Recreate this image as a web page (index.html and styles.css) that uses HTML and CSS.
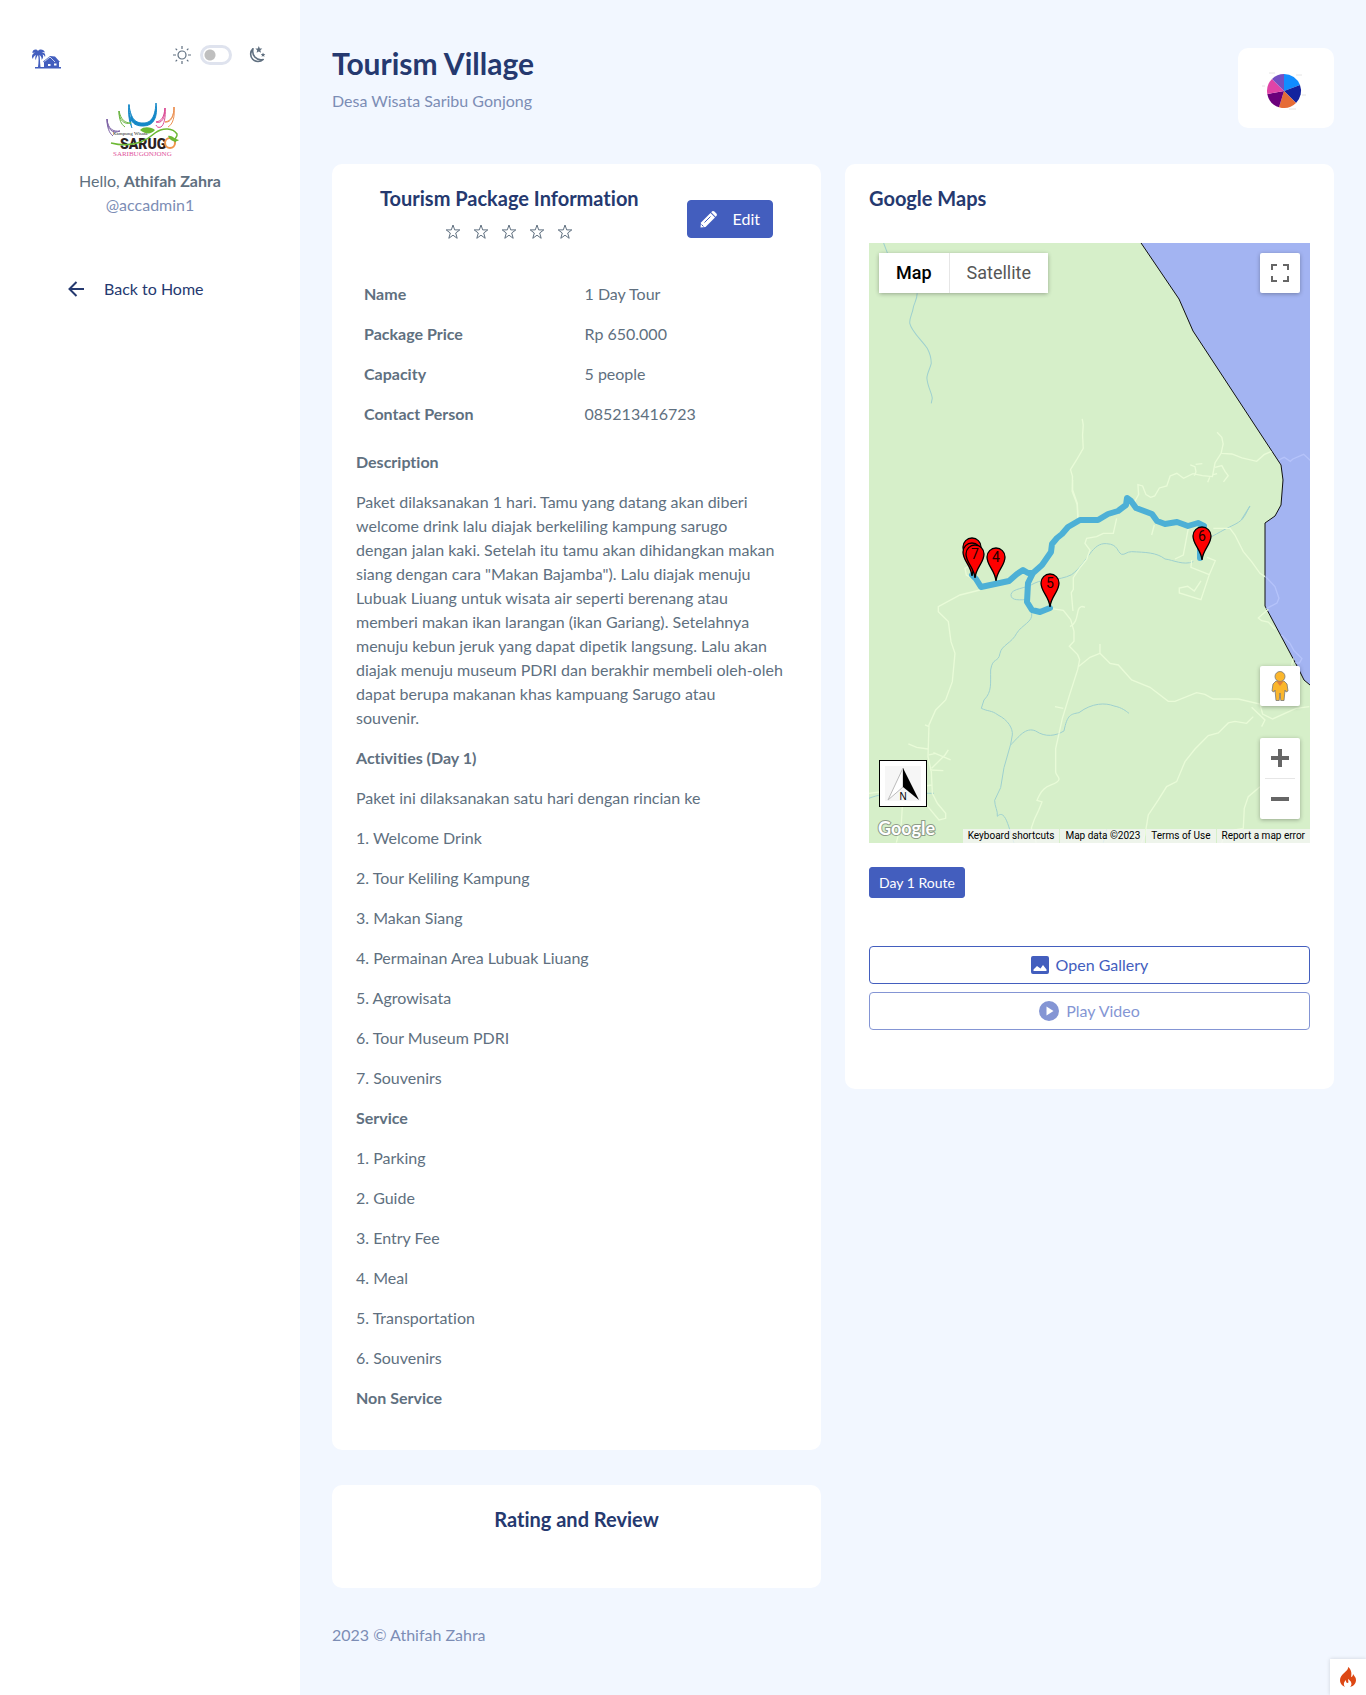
FILE: index.html
```html
<!DOCTYPE html>
<html lang="en">
<head>
<meta charset="utf-8">
<meta name="viewport" content="width=device-width, initial-scale=1">
<title>Tourism Village</title>
<link rel="stylesheet" href="styles.css">
</head>
<body>
<div class="app">
  <aside class="sidebar">
    <div class="sidebar-top">
      <a class="brand" href="#" aria-label="Home">
        <svg width="29" height="20" viewBox="0 0 29 20" fill="#435ebe"><path d="M6 2C4-1 0 1 .5 4L3 3.500C0 5-1 8 1 10c0-2 1-3 3-4-1 2-1 4 0 5 0-2 1-4 2-5 1 3 .5 8 0 12H3v1.500h26V18h-2v-5h1l-5-5.500-5-.5-7 5.500 1 1V18H8.500C8 14 8 9 7.500 6 9 7 10 9 9.500 11c2-2 2-4 1-5.500 1 0 2 1 2.500 2.500C14 5 12 3 9.500 3.500 11 2.500 12 3 13 3.500 12 .5 8-.5 6 2z"/><path d="M12.500 12.500L18 8l5 5" fill="none" stroke="#fff" stroke-width=".7"/><path d="M16 15h2.500v2H16zM22 14.500h2.500v2H22z" fill="#fff"/></svg>
      </a>
      <div class="theme">
        <svg width="18" height="18" viewBox="0 0 18 18" fill="none" stroke="#607080" stroke-width="1.200"><circle cx="9" cy="9" r="4"/><path d="M9 0v3M9 15v3M0 9h3M15 9h3M2.600 2.600l1.500 1.500M13.900 13.900l1.500 1.500M2.600 15.400l1.500-1.500M13.900 4.100l1.500-1.500"/></svg>
        <input class="switch" type="checkbox" role="switch" aria-label="Dark mode">
        <svg width="18" height="18" viewBox="0 0 18 18"><path d="M5 2.700A7.300 7.300 0 1 0 15.200 13.500C8 15 3.500 9 5 2.700z" fill="none" stroke="#607080" stroke-width="1.600" stroke-linejoin="round"/><path d="M10.800 0l1 2.400 2.500.2-1.900 1.700.6 2.500-2.200-1.400-2.200 1.400.6-2.500-1.900-1.700 2.500-.2zM15 6.500l.7 1.500 1.600.1-1.200 1.100.4 1.600-1.500-.9-1.400.9.400-1.600-1.200-1.100 1.600-.1z" fill="#607080"/></svg>
      </div>
    </div>
    <div class="profile">
      <svg class="avatar" width="75" height="56" viewBox="0 0 75 56" fill="none" role="img" aria-label="Sarugo">
        <path d="M23 3c2 15 7 18 14 18S49 17 50 1c2 14-2 23-13 23S23 18 23 3zM23 2c-1 10 0 17 3 24" stroke="#1488c8" fill="#1488c8"/>
        <path d="M13 9c2 9 6 12 12 12-7 2-12-3-12-12 0 9 2 13 6 16" stroke="#6cb544"/>
        <path d="M1 17c1 10 6 13 13 12-7 3-13-1-13-12 0 8 2 14 6 17" stroke="#7d62a5"/>
        <path d="M59 6c-1 9-3 13-9 14 6 2 9-4 9-14 1 9-1 17-4 19-3 1-4 0-5-2" stroke="#db4a94"/>
        <path d="M68 5c0 9-3 14-9 15 6 1 9-6 9-15 1 10-1 17-6 20" stroke="#ec9254"/>
        <text x="7" y="33" font-family="Liberation Serif, serif" font-size="5" fill="#222">Kampung Wisata</text>
        <text x="14" y="47" font-family="Roboto, sans-serif" font-size="14" font-weight="900" fill="#2a211f">SARUG</text>
        <circle cx="64" cy="41" r="5" stroke="#f0954a" stroke-width="2"/>
        <path d="M5 41c20 5 34-1 44-10 8-6 18-5 22 1 1 4-5 5-1 8" stroke="#6cb833" stroke-width="1.500"/>
        <path d="M34 28c4-4 11-3 15 0-4 5-10 4-15 0zM62 34c4-1 6 3 11 4-4 3-9 1-11-4z" fill="#6cb833"/>
        <text x="7" y="54" font-family="Liberation Serif, serif" font-size="7" fill="#e0529a">SARIBUGONJONG</text>
      </svg>
      <div>Hello, <b>Athifah Zahra</b></div>
      <div class="muted">@accadmin1</div>
    </div>
    <nav class="menu">
      <a href="#"><svg width="16" height="16" viewBox="0 0 16 16" fill="none" stroke="#25396f" stroke-width="2"><path d="M16 8H1.500M8.500 1l-7 7 7 7"/></svg><span>Back to Home</span></a>
    </nav>
  </aside>

  <main class="main">
    <header class="page-head">
      <div>
        <h1>Tourism Village</h1>
        <p class="muted">Desa Wisata Saribu Gonjong</p>
      </div>
      <div class="chart-card">
        <svg width="44" height="44" viewBox="-22 -22 44 44" role="img" aria-label="Pie chart"><path d="M0 0V-17A17 17 0 0 1 16-6z" fill="#118dff"/><path d="M0 0L16-6A17 17 0 0 1 12 12z" fill="#12239e"/><path d="M0 0L12 12A17 17 0 0 1-5 16.200z" fill="#e66c37"/><path d="M0 0L-5 16.200A17 17 0 0 1-16.700 3z" fill="#6b007b"/><path d="M0 0L-16.700 3A17 17 0 0 1-12-12z" fill="#e044a7"/><path d="M0 0L-12-12A17 17 0 0 1 0-17z" fill="#744ec2"/><path d="M12-16h6M18 4h4M5 18h7M-15-18h6M-22-5h3" stroke="#e4e4e4"/></svg>
      </div>
    </header>

    <div class="columns">
      <div class="column">
        <section class="card">
          <div class="package-head">
            <div>
              <h2>Tourism Package Information</h2>
              <div class="stars" role="img" aria-label="No rating">
                <svg viewBox="0 0 16 16"><path d="M8 1l1.700 4.900h5.100l-4.100 3.100 1.500 5.300L8 11.200l-4.200 3.100L5.300 9 1.200 5.900h5.100z"/></svg><svg viewBox="0 0 16 16"><path d="M8 1l1.700 4.900h5.100l-4.100 3.100 1.500 5.300L8 11.200l-4.200 3.100L5.300 9 1.200 5.900h5.100z"/></svg><svg viewBox="0 0 16 16"><path d="M8 1l1.700 4.900h5.100l-4.100 3.100 1.500 5.300L8 11.200l-4.200 3.100L5.300 9 1.200 5.900h5.100z"/></svg><svg viewBox="0 0 16 16"><path d="M8 1l1.700 4.900h5.100l-4.100 3.100 1.500 5.300L8 11.200l-4.200 3.100L5.300 9 1.200 5.900h5.100z"/></svg><svg viewBox="0 0 16 16"><path d="M8 1l1.700 4.900h5.100l-4.100 3.100 1.500 5.300L8 11.200l-4.200 3.100L5.300 9 1.200 5.900h5.100z"/></svg>
              </div>
            </div>
            <button class="btn btn-edit" type="button"><svg width="17" height="17" viewBox="0 0 17 17"><path d="M1 11.500L10.500 2l4.500 4.500L5.500 16 .5 16.500z" fill="#fff"/><path d="M11.200 1.300l1-1q1.200-.6 2.200.3l2 2q.9 1 .2 2.200l-1 1z" fill="#fff"/><path d="M4.500 11.500l6-6M1.500 13.500l2 2" stroke="#435ebe" fill="none"/></svg><span>Edit</span></button>
          </div>
          <table class="facts">
            <tbody>
              <tr><th scope="row">Name</th><td>1 Day Tour</td></tr>
              <tr><th scope="row">Package Price</th><td>Rp 650.000</td></tr>
              <tr><th scope="row">Capacity</th><td>5 people</td></tr>
              <tr><th scope="row">Contact Person</th><td>085213416723</td></tr>
            </tbody>
          </table>
          <div class="prose">
            <p><b>Description</b></p>
            <p>Paket dilaksanakan 1 hari. Tamu yang datang akan diberi<br>welcome drink lalu diajak berkeliling kampung sarugo<br>dengan jalan kaki. Setelah itu tamu akan dihidangkan makan<br>siang dengan cara "Makan Bajamba"). Lalu diajak menuju<br>Lubuak Liuang untuk wisata air seperti berenang atau<br>memberi makan ikan larangan (ikan Gariang). Setelahnya<br>menuju kebun jeruk yang dapat dipetik langsung. Lalu akan<br>diajak menuju museum PDRI dan berakhir membeli oleh-oleh<br>dapat berupa makanan khas kampuang Sarugo atau<br>souvenir.</p>
            <p><b>Activities (Day 1)</b></p>
            <p>Paket ini dilaksanakan satu hari dengan rincian ke</p>
            <p>1. Welcome Drink</p>
            <p>2. Tour Keliling Kampung</p>
            <p>3. Makan Siang</p>
            <p>4. Permainan Area Lubuak Liuang</p>
            <p>5. Agrowisata</p>
            <p>6. Tour Museum PDRI</p>
            <p>7. Souvenirs</p>
            <p><b>Service</b></p>
            <p>1. Parking</p>
            <p>2. Guide</p>
            <p>3. Entry Fee</p>
            <p>4. Meal</p>
            <p>5. Transportation</p>
            <p>6. Souvenirs</p>
            <p><b>Non Service</b></p>
          </div>
        </section>
        <section class="card review">
          <h2>Rating and Review</h2>
        </section>
      </div>

      <div class="column">
        <section class="card maps">
          <h2>Google Maps</h2>
          <div class="map">
            <svg class="map-canvas" viewBox="0 0 441 600" preserveAspectRatio="xMidYMid slice" role="img" aria-label="Map of the day 1 route">
              <defs><path id="pin" d="M0 24C-1 13-9 9-9 0A9 9 0 0 1 9 0C9 9 1 13 0 24z" fill="#f00" stroke="#000" stroke-width="1.300"/></defs>
              <rect width="441" height="600" fill="#d6efc9"/>
              <path class="sea" d="M268-6l42 62 14 32 63 96 25 38 2 15-2 25-6 11-10 7v83l32 60 7 14 6 5h30V-6z"/>
              <g class="river" transform="translate(-29 -83) scale(.3355 .3333)">
                <path d="M130 249l12 32M230 400c0 20-10 30-12 45s-12 30-10 45c5 25 40 55 52 75 8 15 12 30 12 45-3 15-13 30-13 45 2 25 15 45 16 60l-3 15M1222 1038l-26 42"/>
              </g>
              <g class="road" transform="translate(-29 -83) scale(.3355 .3333)">
                <path d="M722 777l3 18-2 30 2 40-20 35-18 29 6 20-1 45 15 40 2 45M1124 817l14 15 4 20-6 28-18 28-8 42-30-3-28-6-28 14-20-15-20 8-10 30-22 6-14 24-12 4-14-8-10-26-14-4 2 30-12 22M1138 880l30 2 30 12 44 10 22-20 22-10M1044 915l14 5 3 15-5 12M1060 913l20-2M1118 922l20-5 10 18 9 12-14 19M1110 945l14-4M1102 952l-6 15"/>
                <path class="over-sea" d="M1308 900l16-8 18 12 8-7 32-14 22 20"/>
              </g>
              <g class="river" transform="translate(-9 237) scale(.3333)">
                <path d="M1170 78c-15 25-15 40-45 55s-25 12-70 37M1000 245c-30 12-60-5-85-8-25-20-60-20-100-22-15 0-20 10-30 8-15-8-10-30-45-32-45-4-55 55-105 93-40 20-85 12-110 25-30 18-70 16-72 35-1 20 30 15 50 15M515 400c5 25-30 35-45 60-15 30-45 35-50 60-5 30-22 10-28 50-1 40 5 65-20 90l-8 25c20 10 30 5 50 20 30 15 45 40 43 60l-5 28-20 70-10 60-18 38c0 20 10 30 8 48 25-25 35 40 50 80M452 795c25-25 45-55 75-42 30 20 60 15 85 0 10-50 20-50 45-55 40-30 80-30 105-20 25 5 35 15 45 22M27 955c50-20 100-15 195-15M740 1048l-10 40"/>
              </g>
              <g class="road" transform="translate(-9 237) scale(.3333)">
                <path d="M638 0l0 30 14 40 2 45M770 115l-10 45-30 0-20 10-30 5-5 15 15 20-10 28-20 25-20 30 0 35-6 10 5 55M860 165M875 165l8-30M985 145l-15 80-25 12M570 385l40 6 22 28 10 35 0 30-14 15 25 25 6 15-6 30-24 75-22 72-20 90v70c0 10 20 20 4 30-20 15-40 5-60 55l15 5-10 25-12 25-10 28 15 45M630 440c20-10 20-30 25-50 5-15 15-10 20-8M655 560l35-28 30-12 0-28M720 520l30 30 25 5 40 45 55 22 55 42h20l65-26 25 5 25 14h75l65 15 8 30 30 15 70-32 40-5M1205 740l10-20-40-38M1180 710l-20 20-35-6-20 5-30 30-30 8-40 40-30 38-25 60-30 15-25 40-30 45-10 60-15 35M1200 920l-35 30-12 35-3 60-25 5-30 12-10 28M1060 145l50 0 15 20 25 50 25 30 25 35 15 10"/>
                <path d="M360 330l-60 15-65 35 0 15 30 30 8 60 12 35-8 85-20 55-30 30-20 45-3 95 10 45 3 65 15 30 25 30 0 15-20 5-50-60-12-28M145 792l25 10 34 5M207 825l20-5M210 870l40 2M215 865l40-40 10-15M220 818l52 22M195 735l12 5M27 940l190-25M127 980l-3 50-15 58M335 255l-20 10 4 20 14 8M585 680l25 5M995 240l-2 22 55 22 18-42-25-10M1048 284l-25 75-65-20 0-15 25-5 20 14 20-30"/>
                <path d="M1225 388l-30 26 10 8 20 4 20 22M1300 535l-5 20 15 10"/>
                <path class="over-sea" d="M1217 290l28 30 12 35-6 14-32 17M1265 465l25 25 12 22 24 24-8 14-12-2"/>
              </g>
              <path class="route" d="M103 332l4 4 5 8 28-6 8-7 6-4 5 3 5 0 9-8 9-13 1-8 5-6 5-4 6-7 12-7 18 0 10-6 10-3 8-6 1-7 4 3 5 7 16 6 5 7 8 3 12-2 11 4 10-3 6 3-4 12v20M164 330l-5 10-1 19 5 8 8 2 10-4"/>
              <g font-family="Roboto, sans-serif" font-size="14" text-anchor="middle" fill="#200">
                <use href="#pin" x="103" y="304"/><use href="#pin" x="103" y="309"/>
                <use href="#pin" x="106" y="311"/><text x="106" y="316">7</text>
                <use href="#pin" x="127" y="314"/><text x="127" y="319">4</text>
                <use href="#pin" x="181" y="340"/><text x="181" y="345">5</text>
                <use href="#pin" x="333" y="293"/><text x="333" y="298">6</text>
              </g>
            </svg>
            <div class="map-types"><button type="button" class="on">Map</button><button type="button">Satellite</button></div>
            <button type="button" class="map-btn full" aria-label="Fullscreen"><svg width="18" height="18" fill="none" stroke="#666" stroke-width="2"><path d="M1 6V1h5M12 1h5v5M17 12v5h-5M6 17H1v-5"/></svg></button>
            <div class="map-side">
              <button type="button" class="map-btn" aria-label="Street View"><svg width="18" height="30" viewBox="0 0 18 30" fill="#fbb62c" stroke="#777" stroke-width=".8"><path d="M5 10h8l3 3 1 7-2 1-1-2-1 10.500H9.800L9 22l-.8 7.500H5L4 19l-1 2-2-1 1-7z"/><circle cx="9" cy="5.500" r="5"/><path d="M5.500 10.500h7L9 15z" fill="#e2813a" stroke="none"/></svg></button>
              <div class="zoom"><button type="button" aria-label="Zoom in"><svg width="18" height="18"><path d="M7 0h4v7h7v4h-7v7H7v-7H0V7h7z" fill="#666"/></svg></button><button type="button" aria-label="Zoom out"><svg width="18" height="18"><path d="M0 7h18v4H0z" fill="#666"/></svg></button></div>
            </div>
            <div class="compass"><svg width="36" height="35" viewBox="0 0 36 35"><rect width="36" height="35" fill="#f6f6f6"/><path d="M18 2v19L3 34z" fill="#fff" stroke="#bbb"/><path d="M18 2l16 32-16-13z"/><text x="18" y="34" font-family="Liberation Sans, sans-serif" font-size="10" text-anchor="middle">N</text></svg></div>
            <svg class="google" width="60" height="24" role="img" aria-label="Google"><text x="1" y="18">Google</text></svg>
            <div class="map-legal"><a href="#">Keyboard shortcuts</a><span>Map data ©2023</span><a href="#">Terms of Use</a><a href="#">Report a map error</a></div>
          </div>
          <button class="btn btn-small" type="button">Day 1 Route</button>
          <div class="media">
            <button class="btn btn-outline" type="button"><svg width="18" height="18" viewBox="0 0 18 18"><path d="M2 0h14q2 0 2 2v14q0 2-2 2H2q-2 0-2-2V2q0-2 2-2zM2.500 15h13v-1.500L12 9l-2.500 3.500L6 10l-3.500 3.500z" fill="currentColor" fill-rule="evenodd"/></svg><span>Open Gallery</span></button>
            <button class="btn btn-outline" type="button" disabled><svg width="20" height="20" viewBox="0 0 20 20"><path d="M10 0a10 10 0 1 0 0 20 10 10 0 0 0 0-20zM7.500 5.500l7 4.500-7 4.500z" fill="currentColor" fill-rule="evenodd"/></svg><span>Play Video</span></button>
          </div>
        </section>
      </div>
    </div>
    <footer class="muted">2023 © Athifah Zahra</footer>
  </main>
</div>
<button class="debug" type="button" aria-label="Debug toolbar"><svg width="16" height="20" viewBox="0 0 16 20"><path d="M8 0c1 4-8 7-8 13 0 4 3 6 5 7-2-3-1-5 1-7 0 2 0 3 2 3 1-1 0-2 0-4 3 2 5 5 2 8 4-1 6-4 6-7s-2-4-3-6c0 2-1 3-2 3 1-4 0-8-3-10z" fill="#dd4814"/></svg></button>
</body>
</html>
```
FILE: styles.css
```css
:root {
  --text: #607080;
  --heading: #25396f;
  --muted: #7c8db5;
  --primary: #435ebe;
}

* { box-sizing: border-box; }

body {
  margin: 0;
  background: #f2f7ff;
  color: var(--text);
  font: 16px/24px Lato, "Open Sans", sans-serif;
  font-variant-ligatures: none;
}

h1, h2, p { margin: 0; }

h1, h2 { color: var(--heading); font-weight: 700; }

h1 { font-size: 30px; line-height: 30px; }

h2 { font-size: 20px; line-height: 21px; }

button { font: inherit; cursor: pointer; }

.muted { color: var(--muted); }

.app { display: flex; min-height: 100vh; }

.sidebar { flex: 0 0 300px; background: #fff; }

.sidebar-top {
  display: flex;
  justify-content: space-between;
  padding: 45px 34px 0 32px;
}

.brand { height: 20px; margin-top: 4px; }

.theme { display: flex; align-items: center; height: 20px; }

.switch {
  appearance: none;
  width: 32px;
  height: 20px;
  margin: 0 16px 0 9px;
  border: 3px solid #dfe3ee;
  border-radius: 10px;
  background: radial-gradient(circle at 7px 7px, #bfbfbf 5px, transparent 6px) #fff;
}

.profile {
  display: flex;
  flex-direction: column;
  align-items: center;
  padding-top: 33px;
}

.avatar { margin: 0 0 11px -14px; }

.menu { padding: 60px 32px 0; }

.menu a {
  display: flex;
  align-items: center;
  gap: 20px;
  padding: 0 36px;
  color: var(--heading);
  text-decoration: none;
}

.main { flex: 1; min-width: 0; padding: 48px 32px; }

.page-head {
  display: flex;
  justify-content: space-between;
  margin-bottom: 36px;
}

.page-head p { margin-top: 11px; }

.chart-card {
  display: flex;
  align-items: center;
  justify-content: center;
  width: 96px;
  height: 80px;
  padding-top: 5px;
  padding-right: 5px;
  border-radius: 10px;
  background: #fff;
}

.columns {
  display: grid;
  grid-template-columns: 1fr 1fr;
  align-items: start;
  gap: 24px;
}

.column { display: grid; gap: 35px; min-width: 0; }

.card { min-width: 0; padding: 24px; border-radius: 10px; background: #fff; }

.package-head {
  display: flex;
  justify-content: space-around;
  min-height: 62px;
  margin-bottom: 24px;
}

.stars {
  display: flex;
  align-items: center;
  justify-content: center;
  gap: 12px;
  height: 24px;
  margin-top: 11px;
}

.stars svg { width: 16px; height: 16px; fill: none; stroke: var(--text); stroke-width: 1; }

.btn {
  display: inline-flex;
  align-items: center;
  justify-content: center;
  height: 38px;
  padding: 0 12px;
  border: 1px solid var(--primary);
  border-radius: 4px;
  background: var(--primary);
  color: #fff;
}

.btn-edit { gap: 16px; align-self: center; }

.btn-small { height: 31px; padding: 0 9px; border-radius: 3px; font-size: 14px; }

.facts { width: 100%; border-collapse: collapse; table-layout: fixed; }

.facts th, .facts td { padding: 8px; text-align: left; }

.prose p { margin: 16px 0; }

.review { padding-bottom: 58px; text-align: center; }

.maps h2 { margin-bottom: 34px; }

.map {
  position: relative;
  height: 600px;
  margin-bottom: 24px;
  overflow: hidden;
  font-family: Roboto, sans-serif;
}

.map-canvas { display: block; width: 100%; height: 100%; }

.sea { fill: #a3b4f2; stroke: #111; stroke-width: 1; }

.river { fill: none; stroke: #9ed0cf; stroke-width: 3; }

.road { fill: none; stroke: #e9fbd8; stroke-width: 4; }

.over-sea { stroke: #b5c3fa; }

.route {
  fill: none;
  stroke: #4db0d6;
  stroke-width: 6;
  stroke-linejoin: round;
  stroke-linecap: round;
}

.map button { padding: 0; border: 0; background: #fff; }

.map .map-btn, .zoom, .map-types {
  border-radius: 2px;
  background: #fff;
  box-shadow: 0 1px 4px rgba(0, 0, 0, .3);
}

.map-types { position: absolute; top: 10px; left: 10px; display: flex; height: 40px; }

.map-types button { padding: 0 17px; color: #565656; font-size: 18px; }

.map-types .on { border-right: 1px solid #e6e6e6; color: #000; font-weight: 500; }

.map-btn { display: grid; place-items: center; width: 40px; height: 40px; }

.full { position: absolute; top: 10px; right: 10px; }

.map-side {
  position: absolute;
  right: 10px;
  bottom: 24px;
  display: grid;
  gap: 32px;
}

.zoom { display: grid; height: 81px; padding: 0 5px; }

.zoom button { display: grid; place-items: center; }

.zoom button + button { border-top: 1px solid #e6e6e6; }

.compass {
  position: absolute;
  bottom: 36px;
  left: 10px;
  display: grid;
  place-items: center;
  width: 48px;
  height: 47px;
  border: 1px solid #000;
  background: #fff;
}

.google { position: absolute; bottom: 2px; left: 8px; }

.google text {
  fill: #fff;
  stroke: #8d9b88;
  stroke-width: 2;
  paint-order: stroke;
  font: 700 18px Lato, sans-serif;
}

.map-legal {
  position: absolute;
  right: 0;
  bottom: 0;
  display: flex;
  gap: 1px;
  font-size: 10px;
  line-height: 14px;
}

.map-legal > * {
  padding: 0 5px;
  background: rgba(245, 245, 245, .75);
  color: #000;
  text-decoration: none;
}

.media { display: grid; gap: 8px; margin: 48px 0 35px; }

.btn-outline { gap: 7px; background: #fff; color: var(--primary); }

.btn-outline:disabled { opacity: .65; }

footer { margin-top: 35px; }

.debug {
  position: fixed;
  right: 0;
  bottom: 0;
  width: 36px;
  height: 36px;
  padding: 6px 0 0;
  border: 0;
  background: #fff;
  box-shadow: 0 0 4px rgba(0, 0, 0, .15);
}
```
